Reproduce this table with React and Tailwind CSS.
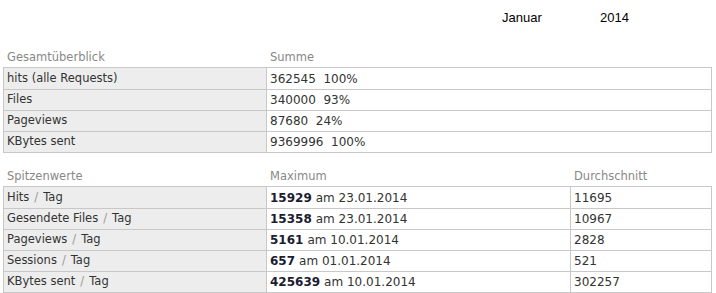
import React from 'react'

const FONT = { fontFamily: '"DejaVu Sans", Verdana, sans-serif' }

const overview = [
  { label: 'hits (alle Requests)', value: '362545  100%' },
  { label: 'Files', value: '340000  93%' },
  { label: 'Pageviews', value: '87680  24%' },
  { label: 'KBytes sent', value: '9369996  100%' },
]

const peaks = [
  { label: 'Hits', max: '15929', date: '23.01.2014', avg: '11695' },
  { label: 'Gesendete Files', max: '15358', date: '23.01.2014', avg: '10967' },
  { label: 'Pageviews', max: '5161', date: '10.01.2014', avg: '2828' },
  { label: 'Sessions', max: '657', date: '01.01.2014', avg: '521' },
  { label: 'KBytes sent', max: '425639', date: '10.01.2014', avg: '302257' },
]

export default function App() {
  return (
    <div className="w-[716px] h-[293px] bg-white text-[#333] overflow-hidden" style={FONT}>
      {/* Month header */}
      <div className="flex h-[36px] items-center pl-[502px] text-[13px] text-black font-['Liberation_Sans',Arial,sans-serif]">
        <span className="w-[98px]">Januar</span>
        <span>2014</span>
      </div>

      <div className="pl-[3px] pt-[13px]">
        {/* Gesamtüberblick */}
        <div className="flex h-[18px] items-end pb-[1px] text-[11.5px] text-[#888]">
          <span className="w-[264px] pl-[4px]">Gesamtüberblick</span>
          <span className="pl-[3px]">Summe</span>
        </div>
        <div className="w-[709px] border border-[#c8c8c8]">
          {overview.map((r, i) => (
            <div key={i} className={`flex h-[21px] ${i > 0 ? 'border-t border-[#c8c8c8]' : ''}`}>
              <div className="w-[263px] bg-[#ededed] border-r border-[#c8c8c8] pl-[3px] flex items-center text-[11.5px]">{r.label}</div>
              <div className="flex-1 pl-[3px] flex items-center text-[12px] whitespace-pre">{r.value}</div>
            </div>
          ))}
        </div>

        {/* Spitzenwerte */}
        <div className="flex h-[18px] items-end pb-[1px] mt-[15px] text-[11.5px] text-[#888]">
          <span className="w-[264px] pl-[4px]">Spitzenwerte</span>
          <span className="w-[304px] pl-[3px]">Maximum</span>
          <span className="pl-[3px]">Durchschnitt</span>
        </div>
        <div className="w-[709px] border border-[#c8c8c8]">
          {peaks.map((r, i) => (
            <div key={i} className={`flex h-[21px] ${i > 0 ? 'border-t border-[#c8c8c8]' : ''}`}>
              <div className="w-[263px] bg-[#ededed] border-r border-[#c8c8c8] pl-[3px] flex items-center text-[11.5px]">
                {r.label} <span className="text-[#999] px-[5px]">/</span> Tag
              </div>
              <div className="w-[304px] border-r border-[#c8c8c8] pl-[3px] flex items-center text-[12px]">
                <b className="text-[#1c1c30] mr-[4px]">{r.max}</b>am {r.date}
              </div>
              <div className="flex-1 pl-[3px] flex items-center text-[12px]">{r.avg}</div>
            </div>
          ))}
        </div>
      </div>
    </div>
  )
}
